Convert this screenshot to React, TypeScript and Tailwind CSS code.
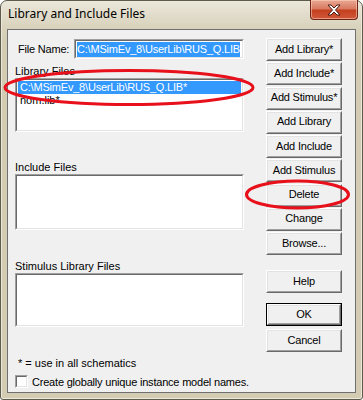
import clsx from 'clsx';

const UI = "font-['Liberation_Sans',Arial,sans-serif]";

function Btn({ label, primary = false }: { label: string; primary?: boolean }) {
  return (
    <button
      type="button"
      className={clsx('block h-[23px] w-[76px] text-[11px] leading-none text-black', primary && 'border border-black')}
    >
      <span className="block h-full border border-t-white border-l-white border-b-[#696969] border-r-[#696969]">
        <span className="flex h-full items-center justify-center border border-t-[#e3e3e3] border-l-[#e3e3e3] border-b-[#a0a0a0] border-r-[#a0a0a0] bg-[#f0f0f0] pb-px tracking-[-0.2px]">
          {label}
        </span>
      </span>
    </button>
  );
}

function Sunken({ className, children }: { className?: string; children?: React.ReactNode }) {
  return (
    <div className={clsx('border border-t-[#a0a0a0] border-l-[#a0a0a0] border-b-white border-r-white', className)}>
      <div className="h-full overflow-hidden border border-t-[#696969] border-l-[#696969] border-b-[#e3e3e3] border-r-[#e3e3e3] bg-white">
        {children}
      </div>
    </div>
  );
}

function Label({ text, className }: { text: string; className?: string }) {
  return <div className={clsx('h-[14px] text-[11px] leading-[14px] text-black', className)}>{text}</div>;
}

export default function App() {
  const path = 'C:\\MSimEv_8\\UserLib\\RUS_Q.LIB';
  return (
    <div className={clsx('relative h-[400px] w-[363px] bg-white', UI)}>
      <div className="flex h-full flex-col rounded-t-[7px] rounded-b-[3px] border border-[#5e5a4c] bg-[linear-gradient(to_bottom,#ebe7da,#d9d3bd_26px,#d3ccb3_40px)] shadow-[inset_0_0_0_1px_#ece8da]">
        {/* title bar */}
        <div className="flex h-[28px] shrink-0 items-start">
          <div className="pl-[7px] pt-[5px] font-['Noto_Sans',sans-serif] text-[12px] leading-[16px] text-black">
            Library and Include Files
          </div>
          <div className="-mt-px ml-auto mr-[4px] flex h-[20px] w-[48px] items-center justify-center rounded-b-[4px] border border-t-0 border-[#6e2516] bg-[linear-gradient(to_bottom,#e9a894,#d97b62_45%,#c4401f_55%,#d0583a)] shadow-[inset_0_0_0_1px_rgba(255,220,200,0.5)]">
            <svg width="14" height="12" viewBox="0 0 14 12">
              <path
                d="M1 1h3l3 3 3-3h3l-4.5 5 4.5 5h-3l-3-3-3 3h-3l4.5-5z"
                fill="#fff"
                stroke="#4a1a10"
                strokeWidth="1"
                strokeLinejoin="round"
              />
            </svg>
          </div>
        </div>

        {/* client area */}
        <div className="mx-[6px] flex h-[364px] border border-[#707070] bg-[#f0f0f0] pl-[7px] pr-[13px]">
          <div className="flex w-[229px] flex-col pt-[9px]">
            <div className="flex h-[20px] items-center">
              <div className="w-[59px] pl-[3px] text-[11px] tracking-[-0.2px] text-black">File Name:</div>
              <Sunken className="h-[20px] w-[170px]">
                <div className="flex h-full items-center pl-px">
                  <span className="whitespace-nowrap bg-[#3399ff] text-[11px] leading-[15px] tracking-[-0.2px] text-white">{path}</span>
                </div>
              </Sunken>
            </div>

            <Label text="Library Files" className="mt-[5px]" />
            <Sunken className="h-[54px]">
              <div className="pt-px pl-px pr-px">
                <div className="h-[13px] bg-[#3399ff] pl-[2px] text-[11px] leading-[13px] tracking-[-0.2px] whitespace-nowrap text-white">
                  {path}*
                </div>
                <div className="h-[13px] pl-[2px] text-[11px] leading-[13px] text-black">nom.lib*</div>
              </div>
            </Sunken>

            <Label text="Include Files" className="mt-[28px]" />
            <Sunken className="h-[56px]" />

            <Label text="Stimulus Library Files" className="mt-[29px]" />
            <Sunken className="h-[54px]" />

            <div className="mt-[29px] h-[14px] whitespace-nowrap pl-[3px] text-[11px] leading-[14px] text-black">
              * = use in all schematics
            </div>
            <div className="mt-[4px] flex h-[15px] items-center whitespace-nowrap">
              <Sunken className="h-[13px] w-[13px] shrink-0" />
              <span className="pl-[4px] text-[11px] leading-[14px] tracking-[-0.2px] text-black">
                Create globally unique instance model names.
              </span>
            </div>
          </div>

          <div className="ml-auto flex flex-col pt-[8px]">
            <div className="flex flex-col gap-[1.25px]">
              <Btn label="Add Library*" />
              <Btn label="Add Include*" />
              <Btn label="Add Stimulus*" />
              <Btn label="Add Library" />
              <Btn label="Add Include" />
              <Btn label="Add Stimulus" />
              <Btn label="Delete" />
              <Btn label="Change" />
              <Btn label="Browse..." />
            </div>
            <div className="mt-[15px]">
              <Btn label="Help" />
            </div>
            <div className="mt-[10px]">
              <Btn label="OK" primary />
            </div>
            <div className="mt-[3px]">
              <Btn label="Cancel" />
            </div>
          </div>
        </div>
      </div>

      {/* red annotation marks */}
      <svg className="pointer-events-none absolute left-0 top-0" width="363" height="400">
        <ellipse cx="129" cy="87.5" rx="124" ry="17" fill="none" stroke="#e8101a" strokeWidth="3" />
        <ellipse cx="297.5" cy="194.5" rx="51" ry="13.5" fill="none" stroke="#e8101a" strokeWidth="3" />
      </svg>
    </div>
  );
}
